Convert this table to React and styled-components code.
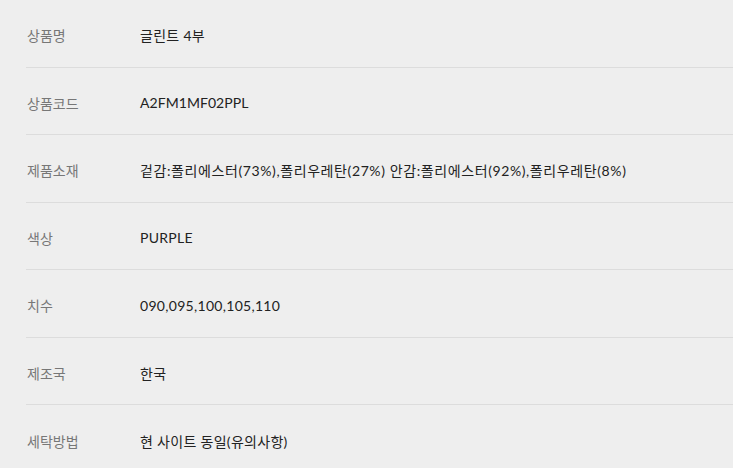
import React from 'react';
import styled, { createGlobalStyle } from 'styled-components';

const GlobalStyle = createGlobalStyle`
  html, body {
    margin: 0;
    padding: 0;
    background: #eeeeee;
  }
  body {
    font-family: Lato, "Noto Sans CJK KR", sans-serif;
  }
`;

const Table = styled.div`
  padding-left: 26px;
  overflow: hidden;
  height: 468px;
`;

const Row = styled.div`
  display: grid;
  grid-template-columns: 114px 1fr;
  align-items: center;
  box-sizing: border-box;
  height: 67.5px;
  padding-top: 4px;
  border-bottom: ${({ $last }) => ($last ? 'none' : '1px solid #dcdcdc')};
`;

const Label = styled.div`
  padding-left: 1px;
  font-size: 14px;
  color: #777777;
`;

const Value = styled.div`
  font-size: 14px;
  color: #222222;
  letter-spacing: ${({ $spacing }) => $spacing || '0.3px'};
  white-space: nowrap;
`;

const rows = [
  { label: '상품명', value: '글린트 4부' },
  { label: '상품코드', value: 'A2FM1MF02PPL', spacing: '0.05px' },
  {
    label: '제품소재',
    value: '겉감:폴리에스터(73%),폴리우레탄(27%) 안감:폴리에스터(92%),폴리우레탄(8%)',
    spacing: '0.6px',
  },
  { label: '색상', value: 'PURPLE' },
  { label: '치수', value: '090,095,100,105,110' },
  { label: '제조국', value: '한국' },
  { label: '세탁방법', value: '현 사이트 동일(유의사항)' },
];

const App = () => {
  return (
    <>
      <GlobalStyle />
      <Table>
        {rows.map((row, i) => (
          <Row key={row.label} $last={i === rows.length - 1}>
            <Label>{row.label}</Label>
            <Value $spacing={row.spacing}>{row.value}</Value>
          </Row>
        ))}
      </Table>
    </>
  );
};

export default App;
